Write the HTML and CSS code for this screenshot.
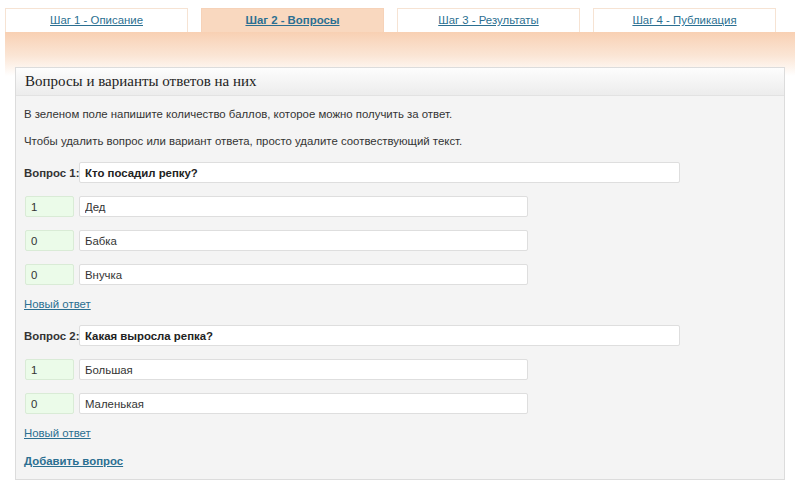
FILE: index.html
```html
<!DOCTYPE html>
<html lang="ru">
<head>
  <meta charset="UTF-8" />
  <title>Шаг 2 - Вопросы</title>
  <link rel="stylesheet" href="styles.css">
</head>
<body>

  <!-- Steps -->
  <div class="tabs">
    <div class="tab"><a href="#">Шаг 1 - Описание</a></div>
    <div class="tab active"><a href="#">Шаг 2 - Вопросы</a></div>
    <div class="tab"><a href="#">Шаг 3 - Результаты</a></div>
    <div class="tab"><a href="#">Шаг 4 - Публикация</a></div>
  </div>

  <div class="stage">
    <div class="panel">
      <div class="panel-head">Вопросы и варианты ответов на них</div>

      <div class="panel-body">
        <p class="hint">В зеленом поле напишите количество баллов, которое можно получить за ответ.</p>
        <p class="hint">Чтобы удалить вопрос или вариант ответа, просто удалите соотвествующий текст.</p>

        <!-- Question 1 -->
        <div class="question">
          <label class="q-label">Вопрос 1:</label>
          <input class="q-input" type="text" value="Кто посадил репку?">
        </div>
        <div class="answer">
          <input class="score" type="text" value="1">
          <input class="a-input" type="text" value="Дед">
        </div>
        <div class="answer">
          <input class="score" type="text" value="0">
          <input class="a-input" type="text" value="Бабка">
        </div>
        <div class="answer">
          <input class="score" type="text" value="0">
          <input class="a-input" type="text" value="Внучка">
        </div>
        <a class="link new-answer" href="#">Новый ответ</a>

        <!-- Question 2 -->
        <div class="question">
          <label class="q-label">Вопрос 2:</label>
          <input class="q-input" type="text" value="Какая выросла репка?">
        </div>
        <div class="answer">
          <input class="score" type="text" value="1">
          <input class="a-input" type="text" value="Большая">
        </div>
        <div class="answer">
          <input class="score" type="text" value="0">
          <input class="a-input" type="text" value="Маленькая">
        </div>
        <a class="link new-answer" href="#">Новый ответ</a>

        <a class="link add-question" href="#">Добавить вопрос</a>
      </div>
    </div>
  </div>

</body>
</html>
```

FILE: styles.css
```css
body {
  margin: 0;
  background: #fff;
  font-family: "Liberation Sans", Arial, sans-serif;
  font-size: 11.4px;
  color: #333;
}

a {
  color: #2b6f91;
}

/* Step tabs */
.tabs {
  display: flex;
  gap: 13px;
  padding: 8px 0 0 5px;
}

.tab {
  width: 183px;
  height: 24px;
  box-sizing: border-box;
  border: 1px solid #f6e3d3;
  border-bottom: none;
  background: #fff;
  text-align: center;
  line-height: 23px;
}

.tab.active {
  background: #f9d8bf;
  border-color: #f6d2b8;
}

.tab.active a {
  font-weight: bold;
}

/* Orange band behind the panel */
.stage {
  margin: 0 5px;
  padding: 35px 10px 0;
  background:
    linear-gradient(#f8d0b3 0, #fbe6d6 24px, #fff 44px);
}

/* Panel */
.panel {
  border: 1px solid #dcdcdc;
  background: #f4f4f4;
}

.panel-head {
  height: 27px;
  line-height: 27px;
  padding-left: 9px;
  border-bottom: 1px solid #e2e2e2;
  background: linear-gradient(#fdfdfd, #ececec);
  font-family: "Liberation Serif", "Times New Roman", serif;
  font-size: 15px;
  color: #222;
}

.panel-body {
  padding: 10px 8px 10px;
}

.hint {
  margin: 0 0 11px;
  line-height: 16px;
}

.question,
.answer {
  display: flex;
  align-items: center;
  margin-bottom: 13px;
}

.question {
  margin-top: 13px;
}

.q-label {
  flex-shrink: 0;
  width: 55px;
  white-space: nowrap;
  font-weight: bold;
  color: #333;
}

input {
  flex-shrink: 0;
  height: 21px;
  box-sizing: border-box;
  border: 1px solid #dedede;
  border-radius: 2px;
  background: #fff;
  padding: 0 5px;
  font-family: "Liberation Sans", Arial, sans-serif;
  font-size: 11.4px;
  color: #333;
}

.q-input {
  width: 601px;
  font-weight: bold;
  color: #222;
}

.score {
  width: 49px;
  margin-left: 1px;
  margin-right: 5px;
  background: #ebfbe9;
  border-color: #d9ebd6;
}

.a-input {
  width: 449px;
}

.link {
  display: block;
  width: max-content;
  line-height: 16px;
}

.new-answer {
  margin-top: -2px;
}

.add-question {
  margin-top: 12px;
  font-weight: bold;
}
```
